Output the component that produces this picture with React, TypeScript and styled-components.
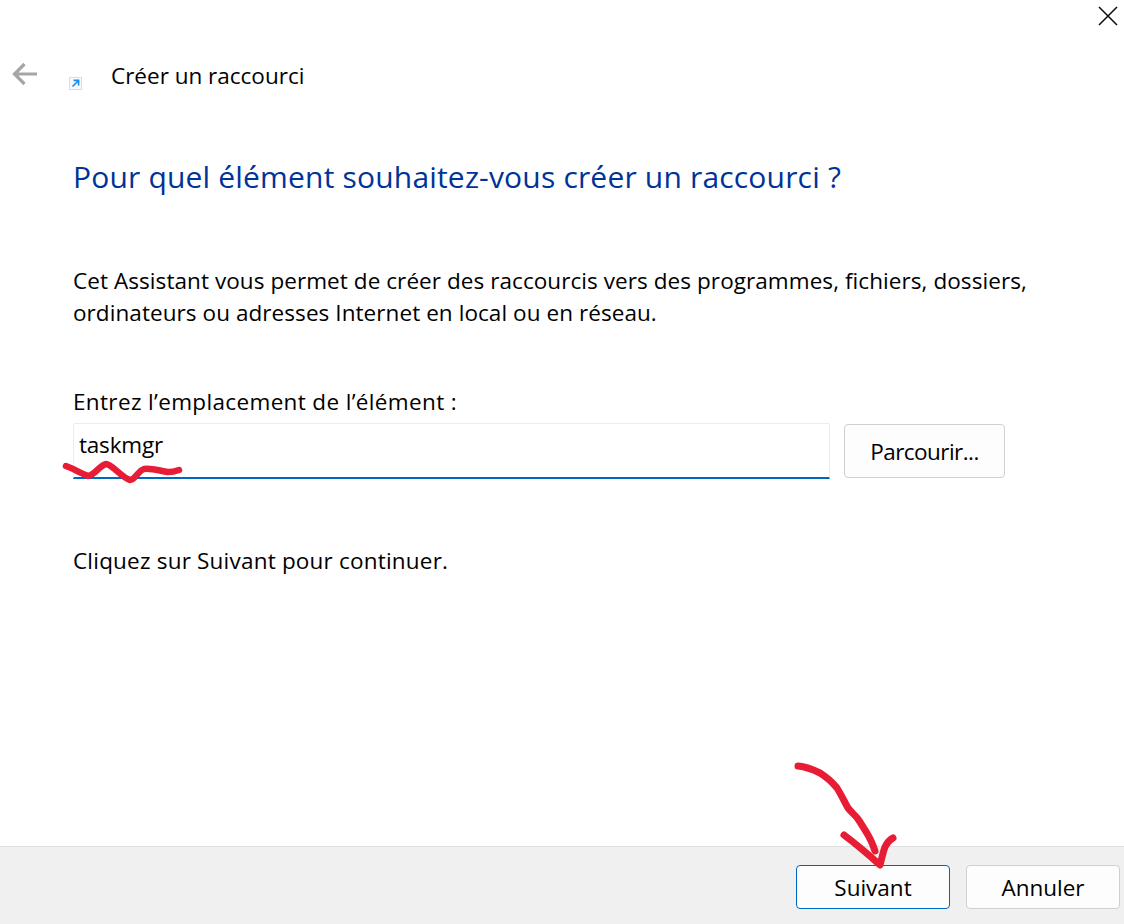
import React from 'react';
import styled, { createGlobalStyle } from 'styled-components';

const GlobalStyle = createGlobalStyle`
	html, body {
		margin: 0;
		padding: 0;
		background: #fff;
	}
	body {
		font-family: 'Open Sans', 'Noto Sans', 'Liberation Sans', sans-serif;
		font-size: 22.5px;
		color: #000;
	}
`;

const Wizard = styled('div')`
	position: relative;
	width: 1124px;
	height: 924px;
	display: flex;
	flex-direction: column;
	overflow: hidden;
	background: #fff;
`;

const TitleBar = styled('div')`
	height: 32px;
	display: flex;
	justify-content: flex-end;
`;

const CloseButton = styled('button')`
	width: 32px;
	height: 32px;
	padding: 0;
	border: 0;
	background: none;
	display: flex;
	align-items: center;
	justify-content: center;
`;

const Header = styled('div')`
	height: 84px;
	display: flex;
	align-items: center;
	padding: 0 0 0 12px;
`;

const BackButton = styled('button')`
	width: 26px;
	height: 26px;
	padding: 0;
	border: 0;
	background: none;
	display: flex;
`;

const ShortcutBadge = styled('span')`
	width: 13px;
	height: 13px;
	margin: 19px 0 0 31px;
	display: flex;
`;

const WizardName = styled('span')`
	margin: 4px 0 0 29px;
	line-height: 30px;
`;

const Body = styled('main')`
	flex: 1;
	padding: 40px 0 0 73px;
	display: flex;
	flex-direction: column;
`;

const Heading = styled('h1')`
	margin: 0;
	font-weight: 400;
	font-size: 30px;
	line-height: 42px;
	color: #003399;
	letter-spacing: 0.18px;
`;

const Intro = styled('p')`
	margin: 67px 0 0;
	line-height: 32px;
	width: 1000px;
	letter-spacing: 0.07px;
`;

const FieldLabel = styled('label')`
	margin-top: 57px;
	line-height: 32px;
	letter-spacing: 0.35px;
`;

const FieldRow = styled('div')`
	margin-top: 5px;
	display: flex;
	gap: 14px;
	align-items: flex-start;
`;

const TextInput = styled('div')`
	box-sizing: border-box;
	width: 757px;
	height: 56px;
	padding: 0 0 0 5px;
	border: 1px solid #ececec;
	border-bottom: 2px solid #0067c0;
	border-radius: 2px 2px 0 0;
	line-height: 42px;
	letter-spacing: -0.2px;
`;

const Button = styled('button')<{ $primary?: boolean; $width: number; $height: number; $tight?: boolean }>`
	box-sizing: border-box;
	width: ${({ $width }) => $width}px;
	height: ${({ $height }) => $height}px;
	padding: 1px 0 0;
	background: #fdfdfd;
	border: 1px solid ${({ $primary }) => ($primary ? '#0067c0' : '#d0d0d0')};
	border-radius: 4px;
	font-family: inherit;
	font-size: inherit;
	letter-spacing: ${({ $tight }) => ($tight ? '-0.55px' : '0')};
	color: #000;
`;

const BrowseButton = styled(Button)`
	margin-top: 1px;
`;

const Hint = styled('p')`
	margin: 66px 0 0;
	line-height: 32px;
	letter-spacing: 0.2px;
`;

const Footer = styled('footer')`
	box-sizing: border-box;
	height: 78px;
	background: #f0f0f0;
	border-top: 1px solid #dfdfdf;
	display: flex;
	justify-content: flex-end;
	align-items: flex-start;
	gap: 16px;
	padding: 18px 4px 0 0;
`;

const Annotations = styled('svg')`
	position: absolute;
	inset: 0;
	pointer-events: none;
`;

export default function App() {
	return (
		<Wizard>
			<GlobalStyle />
			<TitleBar>
				<CloseButton aria-label="Fermer">
					<svg width="20" height="20" viewBox="0 0 20 20">
						<path d="M1 1 L19 19 M19 1 L1 19" stroke="#111" strokeWidth="1.6" fill="none" />
					</svg>
				</CloseButton>
			</TitleBar>
			<Header>
				<BackButton aria-label="Précédent">
					<svg width="26" height="26" viewBox="0 0 26 26">
						<path d="M12.5 3 L2.5 13 L12.5 23 M2.5 13 H25" stroke="#a6a6a6" strokeWidth="3.2" fill="none" />
					</svg>
				</BackButton>
				<ShortcutBadge>
					<svg width="13" height="13" viewBox="0 0 13 13">
						<rect x="0.5" y="0.5" width="12" height="12" fill="#f6f9fd" stroke="#d5dfea" />
						<path d="M3.5 9.5 L8.8 4.2 M4.6 3.4 H9.6 V8.4" stroke="#1a8ae8" strokeWidth="1.6" fill="none" />
					</svg>
				</ShortcutBadge>
				<WizardName>Créer un raccourci</WizardName>
			</Header>
			<Body>
				<Heading>Pour quel élément souhaitez-vous créer un raccourci ?</Heading>
				<Intro>
					Cet Assistant vous permet de créer des raccourcis vers des programmes, fichiers, dossiers,
					ordinateurs ou adresses Internet en local ou en réseau.
				</Intro>
				<FieldLabel>Entrez l’emplacement de l’élément :</FieldLabel>
				<FieldRow>
					<TextInput>taskmgr</TextInput>
					<BrowseButton $width={161} $height={54} $tight>
						Parcourir...
					</BrowseButton>
				</FieldRow>
				<Hint>Cliquez sur Suivant pour continuer.</Hint>
			</Body>
			<Footer>
				<Button $primary $width={154} $height={44}>
					Suivant
				</Button>
				<Button $width={154} $height={44}>
					Annuler
				</Button>
			</Footer>
			<Annotations width="1124" height="924" viewBox="0 0 1124 924" fill="none">
				<path
					d="M66 466 C72 468 80 473 88 476 C94 476 100 465 106 464 C112 464 122 478 130 480 C135 480 138 471 144 469 C152 468 160 471 168 472 C172 472 176 471 179 470"
					stroke="#e81c34"
					strokeWidth="6.5"
					strokeLinecap="round"
					strokeLinejoin="round"
				/>
				<path
					d="M798 766 C808 767 814 770 820 773 C828 778 833 783 837 788 C842 796 845 803 848 808 C852 813 855 815 858 819 C862 825 865 830 868 835 C871 840 873 845 875 851"
					stroke="#e81c34"
					strokeWidth="7"
					strokeLinecap="round"
					strokeLinejoin="round"
				/>
				<path
					d="M844 835 C856 844 870 856 880 865 C882 858 883 852 885 847 C887 843 889 840 893 838"
					stroke="#e81c34"
					strokeWidth="7"
					strokeLinecap="round"
					strokeLinejoin="round"
				/>
			</Annotations>
		</Wizard>
	);
}
